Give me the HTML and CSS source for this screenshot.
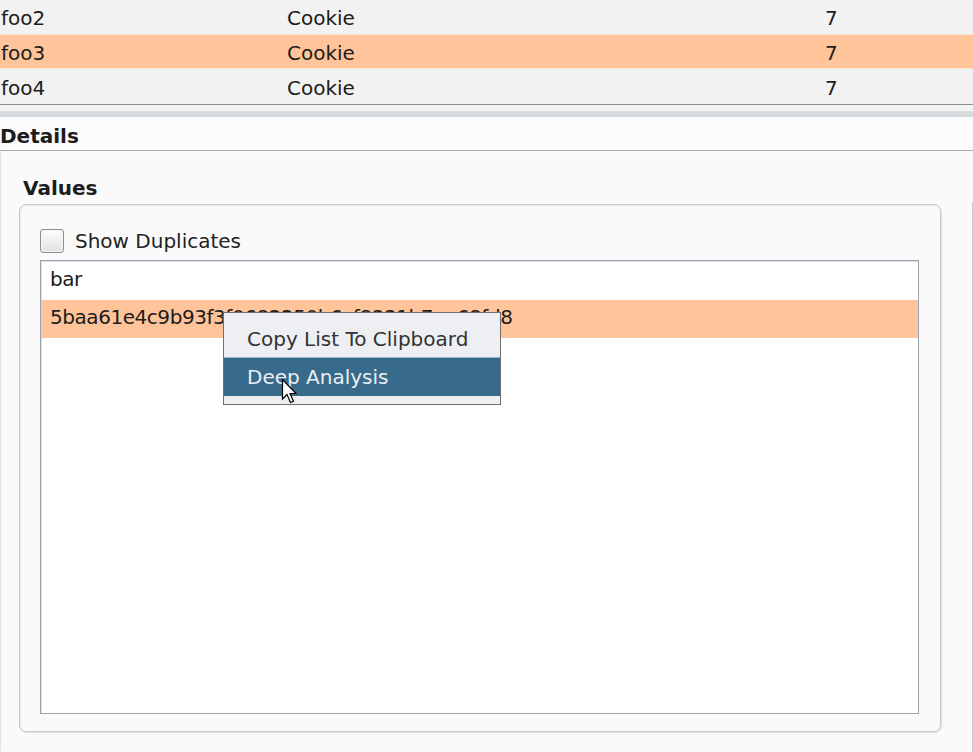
FILE: index.html
```html
<!DOCTYPE html>
<html>
<head>
<meta charset="utf-8">
<link rel="stylesheet" href="styles.css">
</head>
<body>
<div class="table">
  <div class="row"><span class="c1">foo2</span><span class="c2">Cookie</span><span class="c3">7</span></div>
  <div class="row sel"><span class="c1">foo3</span><span class="c2">Cookie</span><span class="c3">7</span></div>
  <div class="row"><span class="c1">foo4</span><span class="c2">Cookie</span><span class="c3">7</span></div>
</div>
<div class="splitter"><div class="split-light"></div><div class="split-band"></div></div>
<div class="details-header">Details</div>
<div class="details-body">
  <div class="values-section">
    <div class="section-title">Values</div>
    <div class="values-panel">
      <label class="check-row"><span class="checkbox"></span><span>Show Duplicates</span></label>
      <div class="list">
        <div class="item">bar</div>
        <div class="item sel">5baa61e4c9b93f3f0682250b6cf8331b7ee68fd8</div>
      </div>
    </div>
  </div>
  <div class="right-panel"></div>
</div>
<div class="menu">
  <div class="menu-item">Copy List To Clipboard</div>
  <div class="menu-item active">Deep Analysis</div>
</div>
<svg class="cursor" width="20" height="27" viewBox="0 0 20 27">
  <path d="M1.5 1.5 L1.5 21 L6 16.5 L9.5 24.5 L12.5 23.2 L9 15.5 L15 15.5 Z" fill="#fff" stroke="#000" stroke-width="1.2" stroke-linejoin="miter"/>
</svg>
</body>
</html>
```
FILE: styles.css
```css
* { box-sizing: border-box; }
html, body { margin: 0; padding: 0; }
body {
  width: 973px;
  height: 752px;
  overflow: hidden;
  background: #fafafa;
  font-family: "DejaVu Sans", sans-serif;
  font-size: 20px;
  color: #1c1c1c;
  position: relative;
}
.table {
  background: #f2f2f2;
  margin-top: -1px;
}
.row {
  display: flex;
  height: 35px;
  line-height: 32px;
  padding-top: 3px;
  white-space: nowrap;
}
.row.sel {
  background: #ffc499;
  box-shadow: inset 0 1px 0 #fbe3d1, inset 0 -1px 0 #fbe3d1;
}
.c1 { width: 287px; padding-left: 1px; }
.c2 { width: 538px; }
.c3 { flex: 1; }
.splitter {
  border-top: 1px solid #8e8e8e;
}
.split-light { height: 6px; background: #f3f4f5; }
.split-band { height: 6px; background: #d8dbe0; }
.details-header {
  height: 34px;
  background: #fbfbfb;
  font-weight: bold;
  line-height: 33px;
  padding-top: 3px;
  border-bottom: 1px solid #a9a9a9;
  box-shadow: 0 1px 1px #d6d6d6;
}
.details-body {
  display: flex;
  height: 600px;
  border-left: 1px solid #e2e2e2;
  background: #fafafa;
}
.values-section {
  width: 939px;
  padding-left: 18px;
  padding-top: 26px;
}
.section-title {
  font-weight: bold;
  line-height: 23px;
  padding-left: 4px;
  margin-bottom: 4px;
}
.values-panel {
  width: 922px;
  height: 528px;
  border: 1px solid #c9c9c9;
  border-radius: 7px;
  box-shadow: inset 1px 1px 1px #e8e8e8, 1px 1px 1px #dedede;
  padding: 24px 21px 17px 20px;
  display: flex;
  flex-direction: column;
}
.check-row {
  display: flex;
  align-items: center;
  gap: 11px;
  height: 24px;
  color: #222;
}
.checkbox {
  width: 24px;
  height: 24px;
  border: 1px solid #8e8e8e;
  border-radius: 3px;
  background: linear-gradient(#fdfdfd, #e0e1e4);
  box-shadow: inset 0 0 0 1px #f4f4f4;
}
.list {
  margin-top: 7px;
  width: 879px;
  height: 454px;
  background: #fff;
  border: 1px solid #9ea2af;
  box-shadow: inset 1px 1px 0 #dcdee3;
  padding-top: 1px;
  color: #1c1c1c;
}
.item {
  height: 38px;
  line-height: 35px;
  padding-left: 9px;
  letter-spacing: -0.45px;
  white-space: nowrap;
}
.item.sel { background: #ffc499; }
.right-panel {
  margin-top: 51px;
  margin-left: 32px;
  width: 40px;
  height: 560px;
  border-left: 1px solid #c9c9c9;
  border-top: 1px solid #c9c9c9;
  border-top-left-radius: 7px;
}
.menu {
  position: absolute;
  left: 223px;
  top: 312px;
  width: 278px;
  height: 93px;
  background: #eeeff3;
  border: 1px solid #6f6f6f;
  padding-top: 6px;
  color: #333;
}
.menu-item {
  height: 38px;
  line-height: 36px;
  padding-top: 2px;
  padding-left: 23px;
  white-space: nowrap;
}
.menu-item.active {
  height: 39px;
  background: #386a8b;
  color: #e9eff4;
  box-shadow: inset 0 1px 0 #9fb6c6;
}
.cursor {
  position: absolute;
  left: 281px;
  top: 378px;
}
```
